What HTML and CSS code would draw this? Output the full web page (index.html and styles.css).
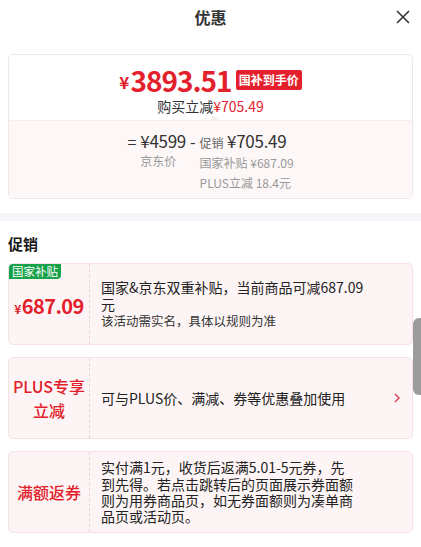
FILE: index.html
```html
<!DOCTYPE html>
<html lang="zh-CN">
<head>
    <meta charset="UTF-8">
    <title>优惠</title>
    <meta name="viewport" content="width=device-width, initial-scale=1.0">
    <link rel="stylesheet" href="styles.css">
</head>
<body>
    <div class="sheet">
        <header class="sheet-header">
            <h2 class="sheet-title">优惠</h2>
            <button class="close-btn" type="button" aria-label="关闭">
                <svg width="14" height="14" viewBox="0 0 14 14"><path d="M1 1 L13 13 M13 1 L1 13" stroke="#333" stroke-width="1.6" fill="none"/></svg>
            </button>
        </header>

        <section class="price-card">
            <div class="price-main">
                <div class="final-price">
                    <span class="yen">¥</span><span class="amount">3893.51</span>
                    <span class="price-tag">国补到手价</span>
                </div>
                <div class="save-line">购买立减<span class="red">¥705.49</span></div>
            </div>
            <div class="price-detail">
                <span class="op">=</span>
                <div class="detail-col">
                    <div class="detail-big">¥4599</div>
                    <div class="detail-label">京东价</div>
                </div>
                <span class="op op-minus">-</span>
                <div class="detail-col">
                    <div class="detail-big"><small>促销</small> ¥705.49</div>
                    <div class="detail-label">国家补贴 ¥687.09</div>
                    <div class="detail-label">PLUS立减 18.4元</div>
                </div>
            </div>
        </section>

        <div class="divider"></div>

        <h3 class="section-title">促销</h3>

        <div class="promo-list">
            <div class="promo-card">
                <span class="promo-badge">国家补贴</span>
                <div class="promo-left">
                    <span class="promo-price"><small>¥</small>687.09</span>
                </div>
                <div class="promo-body">
                    <div class="promo-text">
                        <p class="promo-main">国家&amp;京东双重补贴，当前商品可减687.09元</p>
                        <p class="promo-note">该活动需实名，具体以规则为准</p>
                    </div>
                </div>
            </div>

            <div class="promo-card">
                <div class="promo-left">
                    <span class="promo-name">PLUS专享<br>立减</span>
                </div>
                <div class="promo-body">
                    <p class="promo-main">可与PLUS价、满减、券等优惠叠加使用</p>
                    <svg class="promo-arrow" width="6" height="10" viewBox="0 0 6 10"><path d="M1 1 L5 5 L1 9" stroke="#d9465c" stroke-width="1.5" fill="none"/></svg>
                </div>
            </div>

            <div class="promo-card">
                <div class="promo-left">
                    <span class="promo-name">满额返券</span>
                </div>
                <div class="promo-body">
                    <p class="promo-main promo-narrow">实付满1元，收货后返满5.01-5元券，先到先得。若点击跳转后的页面展示券面额则为用券商品页，如无券面额则为凑单商品页或活动页。</p>
                </div>
            </div>
        </div>
    </div>

    <div class="scroll-thumb"></div>
</body>
</html>
```

FILE: styles.css
```css
* {
    box-sizing: border-box;
}

html,
body {
    height: 100%;
    overflow: hidden;
}

body {
    margin: 0;
    font-family: "Noto Sans CJK SC", "Noto Sans", sans-serif;
    color: #333;
    background-color: #fff;
}

p,
h2,
h3 {
    margin: 0;
}

.sheet-header {
    position: relative;
    height: 34px;
    text-align: center;
}

.sheet-title {
    font-size: 16px;
    font-weight: 700;
    line-height: 34px;
    color: #333;
}

.close-btn {
    position: absolute;
    top: 10px;
    right: 11px;
    padding: 0;
    border: none;
    background: none;
    width: 14px;
    height: 14px;
    display: flex;
}

/* top price card */
.price-card {
    margin: 20px 8px 0;
    border: 1px solid #efe7e7;
    border-radius: 5px;
    overflow: hidden;
}

.price-main {
    padding: 9px 0 4px;
    text-align: center;
}

.final-price {
    display: flex;
    justify-content: center;
    align-items: center;
    height: 32px;
    line-height: 32px;
    color: #e3202b;
    font-weight: 700;
}

.final-price .yen {
    font-size: 17px;
    margin-top: 4px;
    margin-right: 1px;
}

.final-price .amount {
    font-size: 28px;
    letter-spacing: -1px;
}

.price-tag {
    margin-left: 4px;
    padding: 0 3px;
    height: 20px;
    line-height: 20px;
    font-size: 12px;
    font-weight: 700;
    color: #fff;
    background-color: #e3202b;
    border-radius: 2px;
}

.save-line {
    font-size: 14px;
    line-height: 20px;
    color: #333;
}

.red {
    color: #e3202b;
}

.price-detail {
    position: relative;
    display: flex;
    justify-content: center;
    align-items: flex-start;
    padding: 10px 0 5px;
    background-color: #fdf7f7;
    border-top: 1px solid #f7eded;
}

.price-detail::before {
    content: "";
    position: absolute;
    top: -5px;
    left: 201px;
    border: 4px solid transparent;
    border-top: none;
    border-bottom: 4px solid #f6ebeb;
}

.op {
    font-size: 16px;
    line-height: 20px;
    margin-right: 4px;
}

.op-minus {
    margin: 0 4px 0 4px;
}

.detail-big {
    font-size: 17px;
    line-height: 20px;
    letter-spacing: -0.3px;
    color: #333;
}

.detail-big small {
    font-size: 12px;
    letter-spacing: 0;
    color: #666;
}

.detail-label {
    font-size: 12px;
    line-height: 20px;
    color: #999;
}

.divider {
    margin-top: 14px;
    height: 8px;
    background-color: #f5f6fa;
}

.section-title {
    padding: 13px 8px 0;
    font-size: 15px;
    font-weight: 700;
    line-height: 20px;
    color: #1a1a1a;
}

/* promo cards */
.promo-list {
    display: flex;
    flex-direction: column;
    gap: 12px;
    padding: 9px 8px 0;
}

.promo-card {
    position: relative;
    display: flex;
    min-height: 82px;
    background-color: #fdf5f5;
    border: 1px solid #f5e1e2;
    border-radius: 5px;
}

.promo-badge {
    position: absolute;
    top: 0;
    left: 0;
    padding: 0 3px;
    height: 15px;
    line-height: 15px;
    font-size: 11.5px;
    color: #fff;
    background-color: #17a24a;
    border-radius: 4px 0 4px 0;
}

.promo-left {
    flex: 0 0 81px;
    display: flex;
    justify-content: center;
    align-items: center;
    border-right: 1px dashed #efd2d5;
    text-align: center;
}

.promo-price {
    padding-top: 2px;
    font-size: 20px;
    font-weight: 700;
    color: #e3202b;
    letter-spacing: -0.6px;
}

.promo-price small {
    font-size: 12px;
    margin-right: 1px;
}

.promo-name {
    font-size: 16px;
    font-weight: 500;
    line-height: 24px;
    color: #e3202b;
}

.promo-body {
    flex: 1;
    display: flex;
    align-items: center;
    padding: 6px 12px 6px 11px;
}

.promo-text {
    max-width: 268px;
}

.promo-main {
    font-size: 14px;
    line-height: 17px;
    color: #222;
}

.promo-narrow {
    max-width: 254px;
    line-height: 16.4px;
}

.promo-note {
    font-size: 12.5px;
    line-height: 16px;
    color: #333;
}

.promo-arrow {
    margin-left: auto;
    flex-shrink: 0;
}

.scroll-thumb {
    position: absolute;
    top: 318px;
    right: 0;
    width: 8px;
    height: 77px;
    background-color: #9c9c9c;
    border-radius: 6px 0 0 6px;
}
```
